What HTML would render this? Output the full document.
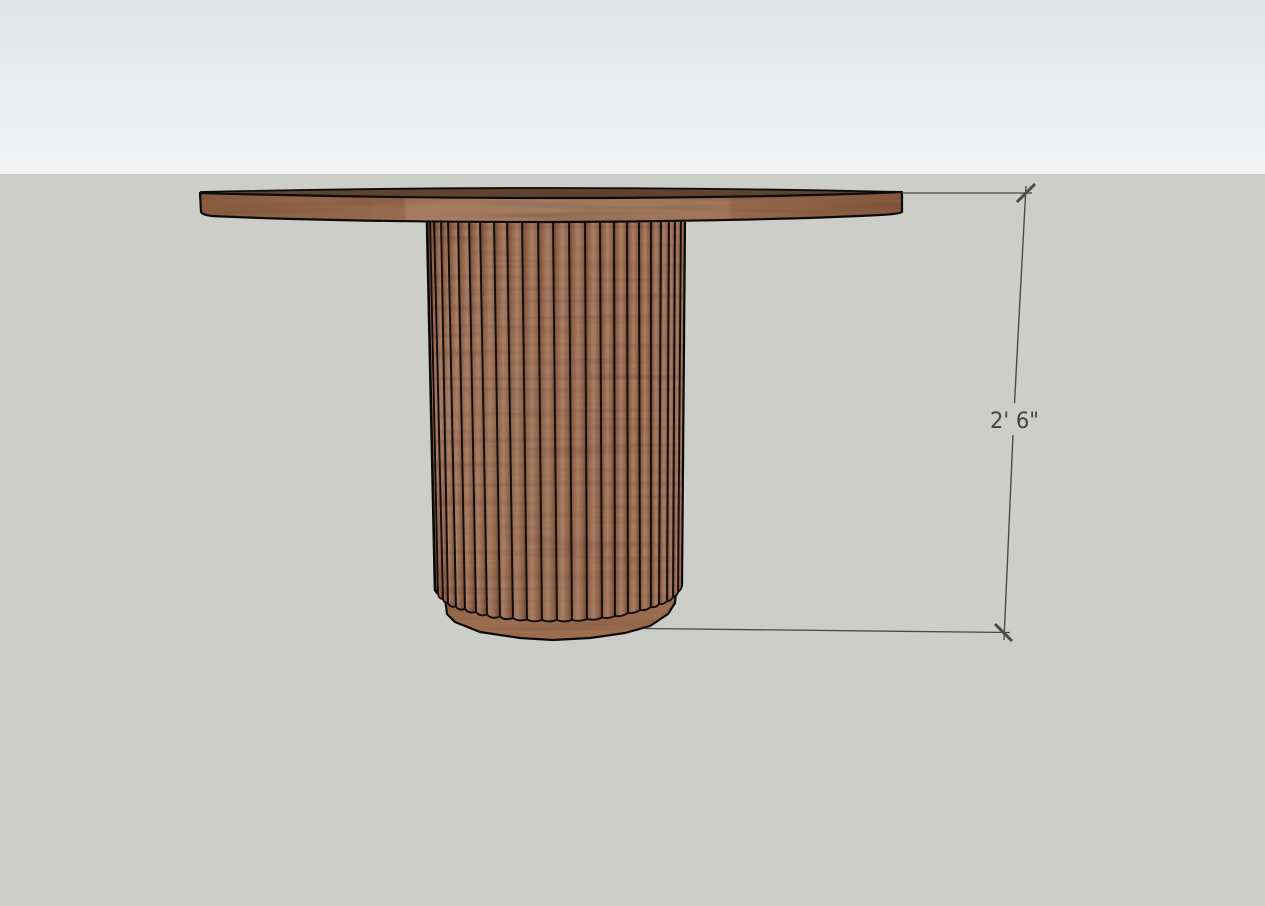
<!DOCTYPE html>
<html>
<head>
<meta charset="utf-8">
<title>Table</title>
<style>
html,body{margin:0;padding:0;width:1265px;height:906px;overflow:hidden;background:#cdcec9}
svg{display:block}
</style>
</head>
<body>
<svg width="1265" height="906" viewBox="0 0 1265 906" xmlns="http://www.w3.org/2000/svg">
<defs>
<linearGradient id="sky" x1="0" y1="0" x2="0" y2="1">
<stop offset="0" stop-color="#e0e4e6"/><stop offset="0.55" stop-color="#ebedef"/><stop offset="1" stop-color="#f1f2f4"/>
</linearGradient>
<linearGradient id="fl" x1="0" y1="0" x2="1" y2="0">
<stop offset="0" stop-color="#6c452e"/><stop offset="0.2" stop-color="#8d6248"/><stop offset="0.5" stop-color="#a97f66"/><stop offset="0.8" stop-color="#8d6248"/><stop offset="1" stop-color="#684229"/>
</linearGradient>
<linearGradient id="band" x1="0" y1="222" x2="0" y2="620" gradientUnits="userSpaceOnUse">
<stop offset="0" stop-color="#000" stop-opacity="0"/><stop offset="0.55" stop-color="#000" stop-opacity="0.04"/><stop offset="0.72" stop-color="#3a1d08" stop-opacity="0.22"/><stop offset="0.85" stop-color="#000" stop-opacity="0.03"/><stop offset="1" stop-color="#000" stop-opacity="0"/>
</linearGradient>
<linearGradient id="top" x1="0" y1="0" x2="1" y2="0">
<stop offset="0" stop-color="#8a5d42"/><stop offset="0.24" stop-color="#93684d"/><stop offset="0.245" stop-color="#966a50"/><stop offset="0.29" stop-color="#966a50"/><stop offset="0.295" stop-color="#a67c62"/><stop offset="0.75" stop-color="#9f765d"/><stop offset="0.76" stop-color="#93684d"/><stop offset="1" stop-color="#84573c"/>
</linearGradient>
<filter id="grain" x="-5%" y="-5%" width="110%" height="110%" color-interpolation-filters="sRGB">
<feTurbulence type="fractalNoise" baseFrequency="0.006 0.16" numOctaves="2" seed="7" result="n"/>
<feColorMatrix in="n" type="matrix" values="0 0 0 0.3 0.84  0 0 0 0.3 0.83  0 0 0 0.3 0.82  0 0 0 0 1" result="g"/>
<feBlend in="SourceGraphic" in2="g" mode="multiply" result="m"/>
<feComposite in="m" in2="SourceGraphic" operator="in"/>
</filter>
</defs>

<rect x="0" y="0" width="1265" height="174" fill="url(#sky)"/>
<rect x="0" y="174" width="1265" height="732" fill="#cdcec9"/>

<!-- base plinth -->
<path d="M445,598 L447,614 L455,622 L480,632 L520,638 L553,640 L590,638 L625,633 L650,626 L668,614 L675,603 L676,590 Z" fill="#9c6e50" filter="url(#grain)"/>
<path d="M445,598 L447,614 L455,622 L480,632 L520,638 L553,640 L590,638 L625,633 L650,626 L668,614 L675,603 L676,590" fill="none" stroke="#0d0a08" stroke-width="2.2" stroke-linejoin="round"/>

<!-- flutes -->
<g fill="url(#fl)" filter="url(#grain)">
<path d="M427,222 L430,222 L438,594 Q436,593 435,590 Z"/>
<path d="M430,222 L434,222 L443,599 Q439,599 438,594 Z"/>
<path d="M434,222 L441,222 L448,603 Q444,603 443,599 Z"/>
<path d="M441,222 L448,222 L456,606.5 Q450,608 448,603 Z"/>
<path d="M448,222 L458,222 L465,609 Q459,611 456,606.5 Z"/>
<path d="M458,222 L469,222 L476,612 Q469,614 465,609 Z"/>
<path d="M469,222 L480,222 L487,614.5 Q480,617 476,612 Z"/>
<path d="M480,222 L494,222 L500,616.5 Q492,620 487,614.5 Z"/>
<path d="M494,222 L507,222 L513,618 Q505,621 500,616.5 Z"/>
<path d="M507,222 L522,222 L527,619.5 Q519,622 513,618 Z"/>
<path d="M522,222 L538,222 L542,620 Q534,623 527,619.5 Z"/>
<path d="M538,222 L553,222 L557,620 Q549,623 542,620 Z"/>
<path d="M553,222 L569,222 L572,620 Q564,623 557,620 Z"/>
<path d="M569,222 L585,222 L587,619 Q580,622 572,620 Z"/>
<path d="M585,222 L600,222 L602,617.5 Q595,621 587,619 Z"/>
<path d="M600,222 L614,222 L615,616 Q608,619 602,617.5 Z"/>
<path d="M614,222 L627,222 L628,613 Q622,617 615,616 Z"/>
<path d="M627,222 L639,222 L640,610 Q634,614 628,613 Z"/>
<path d="M639,222 L651,222 L651,607 Q646,611 640,610 Z"/>
<path d="M651,222 L661,222 L659,604 Q656,608 651,607 Z"/>
<path d="M661,222 L669,222 L667,601 Q663,605 659,604 Z"/>
<path d="M669,222 L675,222 L673,597 Q671,601 667,601 Z"/>
<path d="M675,222 L681,222 L678,592 Q677,596 673,597 Z"/>
<path d="M681,222 L685,222 L682,586 Q681,590 678,592 Z"/>
</g>
<rect x="426" y="222" width="260" height="400" fill="url(#band)" style="mix-blend-mode:multiply" clip-path="path('M427,222 L685,222 L682,586 L673,597 L640,610 L557,620 L476,612 L443,599 L435,590 Z')"/>
<!-- flute lines -->
<g fill="none" stroke="#120d0a" stroke-width="1.9" stroke-linejoin="round" stroke-linecap="round">
<path d="M430,222 L438,594 Q439,599 443,599 Q444,603 448,603 Q450,608 456,606.5 Q459,611 465,609 Q469,614 476,612 Q480,617 487,614.5 Q492,620 500,616.5 Q505,621 513,618 Q519,622 527,619.5 Q534,623 542,620 Q549,623 557,620 Q564,623 572,620 Q580,622 587,619 Q595,621 602,617.5 Q608,619 615,616 Q622,617 628,613 Q634,614 640,610 Q646,611 651,607 Q656,608 659,604 Q663,605 667,601 Q671,601 673,597 Q677,596 678,592 Q681,590 682,586"/>
<path d="M434,222 L443,599 M441,222 L448,603 M448,222 L456,606 M458,222 L465,609 M469,222 L476,612 M480,222 L487,614 M494,222 L500,616 M507,222 L513,618 M522,222 L527,619 M538,222 L542,620 M553,222 L557,620 M569,222 L572,620 M585,222 L587,619 M600,222 L602,617 M614,222 L615,616 M627,222 L628,613 M639,222 L640,610 M651,222 L651,607 M661,222 L659,604 M669,222 L667,601 M675,222 L673,597 M681,222 L678,592"/>
</g>
<path d="M427,222 L435,590 L438,594" fill="none" stroke="#0b0908" stroke-width="2.6"/>
<path d="M685,222 L682,586" fill="none" stroke="#0b0908" stroke-width="2.2"/>

<!-- table top -->
<path d="M200,193 Q550,183 902,192 L902,193 Q760,199 551,199 Q380,199 200,193 Z" fill="#5e432f"/>
<path d="M200,192 Q550,184 902,192" fill="none" stroke="#0d0a08" stroke-width="1.8"/>
<path d="M200,193 Q380,198 551,198 Q760,198 902,192 L902,212 Q899,214 880,215 Q760,221 551,222 Q340,222 212,216 Q203,215 201,212 Z" fill="url(#top)" filter="url(#grain)"/>
<path d="M200,193 Q380,198 551,198 Q760,198 902,192 L902,212 Q899,214 880,215 Q760,221 551,222 Q340,222 212,216 Q203,215 201,212 Z" fill="none" stroke="#0d0a08" stroke-width="2.2" stroke-linejoin="round"/>

<!-- dimensions -->
<g fill="none" stroke="#4a4a48">
<path d="M902,193 L1032,193" stroke-width="1.3"/>
<path d="M645,628.5 L1010,632.5" stroke-width="1.3"/>
<path d="M1026,186 L1014.5,403 M1013,435 L1004,640" stroke-width="1.4"/>
<path d="M1017,202 L1035,184" stroke-width="3"/>
<path d="M995,624 L1012,641" stroke-width="3"/>
</g>
<text x="990" y="428" font-family="'DejaVu Sans',sans-serif" font-size="22" fill="#444442" textLength="49" lengthAdjust="spacingAndGlyphs">2' 6"</text>
</svg>
</body>
</html>
